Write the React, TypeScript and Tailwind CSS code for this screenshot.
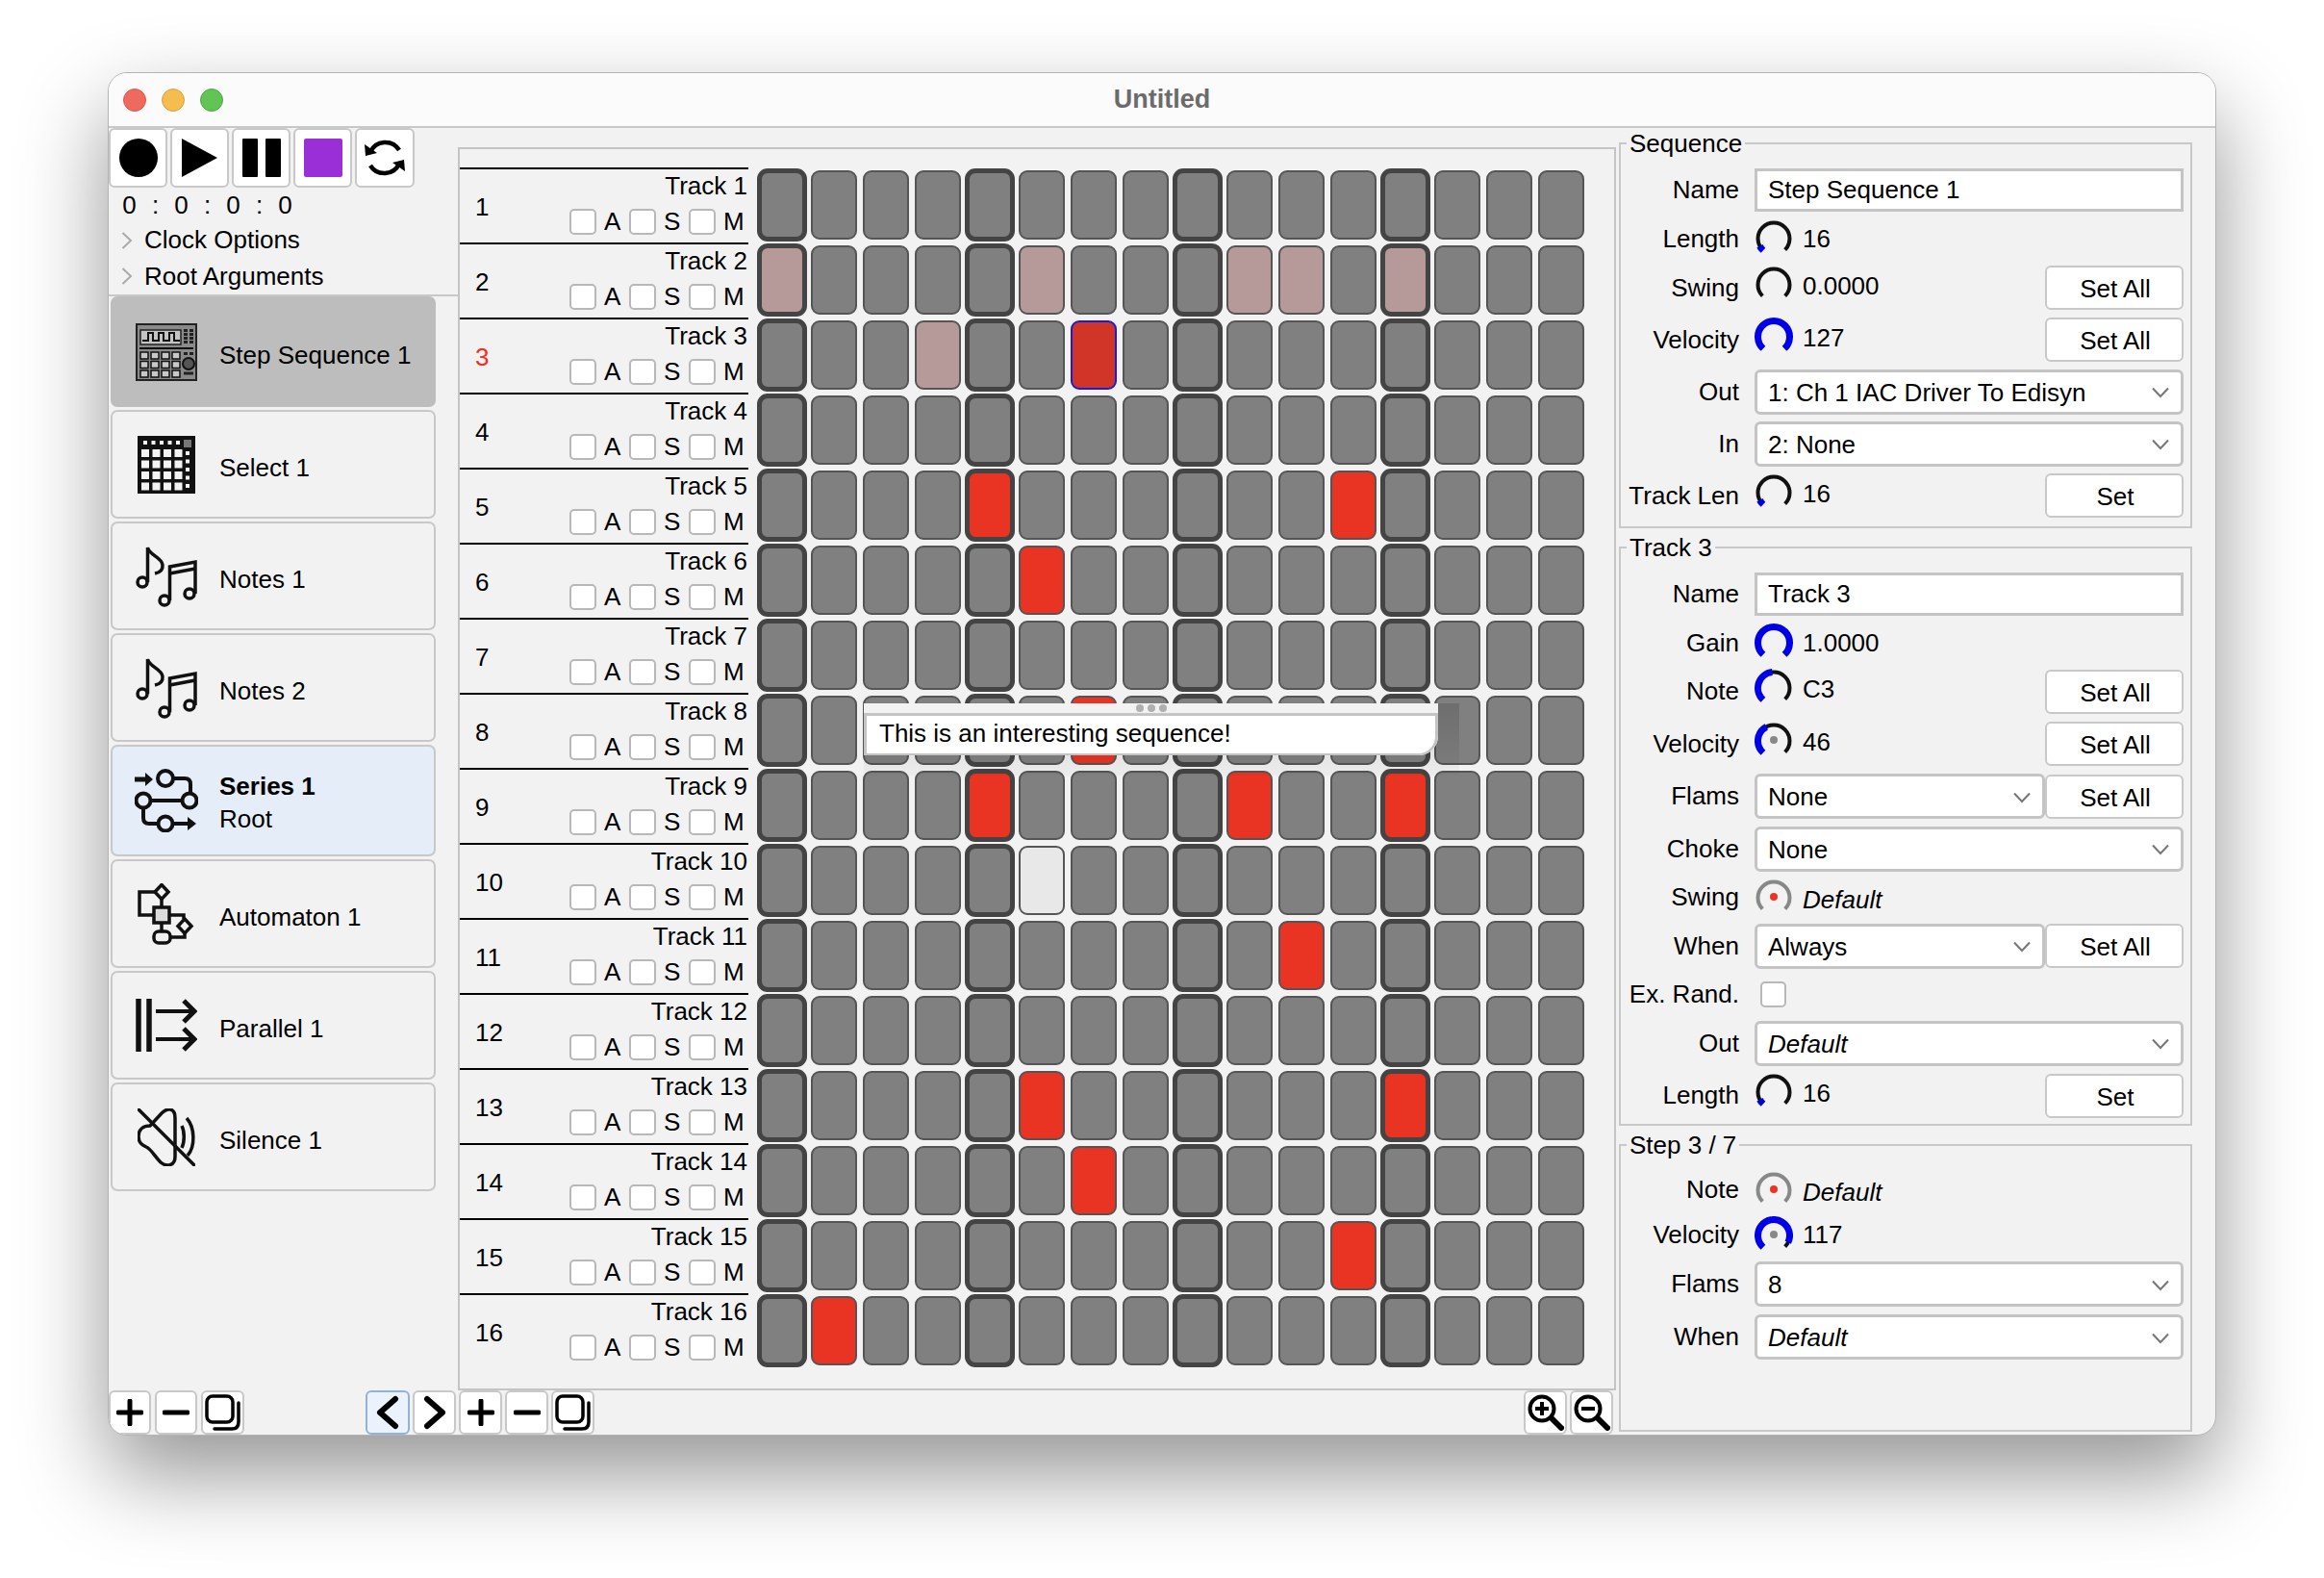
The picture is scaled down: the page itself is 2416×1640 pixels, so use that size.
import type { ReactNode } from "react";

const RED = "#e93323";

// row index -> column -> cell colour
const cells: Record<number, Record<number, string>> = {
  1: { 0: "pale", 5: "pale", 9: "pale", 10: "pale", 12: "pale" },
  2: { 3: "pale", 6: "selected" },
  4: { 4: "red", 11: "red" },
  5: { 5: "red" },
  7: { 6: "red" },
  8: { 4: "red", 9: "red", 12: "red" },
  9: { 5: "white" },
  10: { 10: "red" },
  12: { 5: "red", 12: "red" },
  13: { 6: "red" },
  14: { 11: "red" },
  15: { 1: "red" },
};

const fills: Record<string, string> = {
  off: "bg-[#808080]",
  pale: "bg-[#b69a9a]",
  red: "bg-[#e93323]",
  selected: "bg-[#d13527]",
  white: "bg-[#e8e8e8]",
};

const Cell = ({ kind, thick }: { kind: string; thick: boolean }) => {
  const size = thick ? "w-[52px] h-[76px] border-[5px] border-[#444444] rounded-[11px]" : "w-[48px] h-[72px] border-2 border-[#555555] rounded-[9px]";
  const blue = kind === "selected" ? "!border-[#1a1ae0]" : "";
  return <div className={`${size} ${blue} ${fills[kind]}`} />;
};

const Check = ({ label }: { label: string }) => (
  <div className="flex w-[62px] items-center gap-[8px]">
    <div className="h-[27px] w-[28px] rounded-[5px] border-2 border-[#b8b8b8] bg-white" />
    <span>{label}</span>
  </div>
);

const TrackRow = ({ index }: { index: number }) => (
  <div className="flex h-[78px]">
    <div className="flex h-[78px] w-[300px] justify-between border-t-2 border-black pl-[16px] pr-[1px]">
      <div className={`mt-[24px] leading-[30px] ${index === 2 ? "text-[#f03025]" : ""}`}>{index + 1}</div>
      <div className="flex flex-col items-end">
        <div className="h-[34px] leading-[34px]">Track {index + 1}</div>
        <div className="mr-[-1px] flex h-[40px]">
          <Check label="A" />
          <Check label="S" />
          <Check label="M" />
        </div>
      </div>
    </div>
    <div className="ml-[8px] grid w-[864px] grid-cols-16">
      {Array.from({ length: 16 }, (_, col) => (
        <div key={col} className="flex h-[78px] items-center justify-center">
          <Cell kind={cells[index]?.[col] ?? "off"} thick={col % 4 === 0} />
        </div>
      ))}
    </div>
  </div>
);

const polar = (deg: number, r: number) => {
  const a = (deg * Math.PI) / 180;
  return `${20 + r * Math.sin(a)} ${20 - r * Math.cos(a)}`;
};

const arc = (from: number, to: number, r: number) =>
  `M${polar(from, r)} A${r} ${r} 0 ${to - from > 180 ? 1 : 0} 1 ${polar(to, r)}`;

const Knob = ({ value, dot, gray }: { value: number; dot?: string; gray?: boolean }) => {
  const start = -138;
  const end = start + 276 * value;
  return (
    <svg width="40" height="40" viewBox="0 0 40 40" className="shrink-0">
      <path d={arc(-135, 135, 16.5)} fill="none" stroke={gray ? "#888888" : "#111111"} strokeWidth="4" />
      {value > 0 && <path d={arc(start, Math.max(end, start + 20), 16.5)} fill="none" stroke="#0000e6" strokeWidth="7" />}
      {dot && <circle cx="20" cy="19" r="4" fill={dot} />}
    </svg>
  );
};

const Row = ({ label, h, children }: { label: string; h: string; children?: ReactNode }) => (
  <div className={`flex items-center ${h}`}>
    <div className="w-[123px] shrink-0 text-right">{label}</div>
    <div className="ml-[16px] flex min-w-0 flex-1 items-center">{children}</div>
  </div>
);

const Field = ({ text }: { text: string }) => (
  <div className="flex h-full flex-1 items-center border-[3px] border-[#c4c4c4] bg-white pl-[11px]">{text}</div>
);

const SetButton = ({ text }: { text: string }) => (
  <div className="flex h-full w-[144px] shrink-0 items-center justify-center rounded-[6px] border-2 border-[#c8c8c8] bg-white pl-[2px] pt-[3px]">{text}</div>
);

const Combo = ({ text, italic }: { text: string; italic?: boolean }) => (
  <div className="flex h-full min-w-0 flex-1 items-center justify-between rounded-[6px] border-[3px] border-[#c4c4c4] bg-white pl-[11px] pr-[11px] pt-[2px]">
    <span className={italic ? "italic" : ""}>{text}</span>
    <svg width="20" height="12" viewBox="0 0 20 12">
      <path d="M2 1.5 L10 10 L18 1.5" fill="none" stroke="#777777" strokeWidth="2" />
    </svg>
  </div>
);

const KnobValue = ({ value, dot, gray, text, italic, lift }: { value: number; dot?: string; gray?: boolean; text: string; italic?: boolean; lift?: boolean }) => (
  <div className="flex flex-1 items-center">
    <div className={lift ? "mt-[-7px]" : ""}>
      <Knob value={value} dot={dot} gray={gray} />
    </div>
    <span className={`ml-[10px] ${italic ? "mt-[6px] italic" : ""} ${lift ? "mt-[-4px]" : ""}`}>{text}</span>
  </div>
);

const Group = ({ title, box, children }: { title: string; box: string; children: ReactNode }) => (
  <fieldset className={`w-[596px] border-2 border-[#c8c8c8] pr-[7px] ${box}`}>
    <legend className="ml-[6px] px-[3px] leading-[30px]">{title}</legend>
    {children}
  </fieldset>
);

const ToolButton = ({ w, active, children }: { w: string; active?: boolean; children: ReactNode }) => (
  <div className={`flex h-full shrink-0 items-center justify-center rounded-[6px] border-2 ${w} ${active ? "border-[#8fb3dc] bg-[#ebf2fb]" : "border-[#c8c8c8] bg-white"}`}>
    {children}
  </div>
);

const PlusIcon = () => (
  <svg width="28" height="28" viewBox="0 0 28 28">
    <path d="M2 14H26M14 2V26" stroke="#000" strokeWidth="5" strokeLinecap="round" />
  </svg>
);
const MinusIcon = () => (
  <svg width="28" height="28" viewBox="0 0 28 28">
    <path d="M2 14H26" stroke="#000" strokeWidth="5" strokeLinecap="round" />
  </svg>
);
const CopyIcon = () => (
  <svg width="38" height="38" viewBox="0 0 38 38">
    <rect x="2" y="2" width="27" height="27" rx="6" fill="none" stroke="#000" strokeWidth="3.5" />
    <path d="M35 9V29Q35 36 28 36H10" fill="none" stroke="#000" strokeWidth="3.5" strokeLinecap="round" />
  </svg>
);
const NavIcon = ({ flip }: { flip?: boolean }) => (
  <svg width="24" height="36" viewBox="0 0 24 36">
    <path d={flip ? "M4 4L20 18L4 32" : "M20 4L4 18L20 32"} fill="none" stroke="#000" strokeWidth="6" strokeLinecap="round" strokeLinejoin="round" />
  </svg>
);
const ZoomIcon = ({ plus }: { plus?: boolean }) => (
  <svg width="38" height="38" viewBox="0 0 38 38">
    <circle cx="15" cy="15" r="12.5" fill="none" stroke="#000" strokeWidth="4" />
    <path d="M8 15H22" stroke="#000" strokeWidth="4" />
    {plus && <path d="M15 8V22" stroke="#000" strokeWidth="4" />}
    <path d="M25 25L35 35" stroke="#000" strokeWidth="6" strokeLinecap="round" />
  </svg>
);

const SyncIcon = () => (
  <svg width="44" height="44" viewBox="0 0 44 44">
    <path d="M7 16A17 17 0 0 1 37 14" fill="none" stroke="#000" strokeWidth="4.5" />
    <path d="M37 28A17 17 0 0 1 7 30" fill="none" stroke="#000" strokeWidth="4.5" />
    <path d="M1 8L2 20L14 17Z" fill="#000" />
    <path d="M43 36L42 24L30 27Z" fill="#000" />
  </svg>
);

const StepIcon = () => (
  <svg width="64" height="60" viewBox="0 0 64 60">
    <rect x="1" y="1" width="62" height="58" fill="#8a8a8a" stroke="#222" strokeWidth="2" />
    <rect x="5" y="7" width="42" height="15" fill="#c4c4c4" stroke="#222" strokeWidth="1.5" />
    <path d="M7 18H13V10H18V18H24V10H29V18H35V10H40V18H46" fill="none" stroke="#111" strokeWidth="2" />
    <path d="M4 26H60" stroke="#111" strokeWidth="2" />
    {[0, 1, 2].map((r) =>
      [0, 1, 2, 3].map((c) => <rect key={`${r}${c}`} x={5 + c * 11} y={30 + r * 9.5} width="8" height="7" fill="#c8c8c8" stroke="#111" strokeWidth="1.5" />),
    )}
    {[0, 1, 2, 3, 4].map((r) =>
      [0, 1].map((c) => <rect key={`k${r}${c}`} x={50 + c * 6} y={6 + r * 4 + (r > 3 ? 8 : 0)} width="4" height="3" fill="#222" />),
    )}
    <circle cx="55" cy="42" r="6" fill="#555" stroke="#111" strokeWidth="2" />
    <path d="M50 52H60" stroke="#222" strokeWidth="3" />
  </svg>
);

const GridIcon = () => (
  <svg width="60" height="60" viewBox="0 0 60 60">
    <rect width="60" height="60" fill="#111" />
    {[0, 1, 2, 3].map((r) =>
      [0, 1, 2, 3].map((c) => <rect key={`${r}${c}`} x={4 + c * 11.5} y={14 + r * 11.5} width="8" height="8" fill="#f3f3f3" />),
    )}
    {[0, 1, 2, 3, 4].map((c) => (
      <rect key={c} x={6 + c * 8.5} y="5" width="4" height="4" fill="#f3f3f3" />
    ))}
    {[0, 1, 2, 3, 4].map((r) => (
      <rect key={r} x="50" y={16 + r * 8.5} width="4" height="4" fill="#f3f3f3" />
    ))}
    <rect x="48" y="4" width="8" height="8" fill="#777" />
  </svg>
);

const NotesIcon = () => (
  <svg width="64" height="64" viewBox="0 0 64 64" fill="none" stroke="#111" strokeWidth="3.5">
    <circle cx="7" cy="38" r="5" />
    <path d="M12.5 38V2C14 10 27 12 28 20C28.5 25 25 28 20 29" />
    <circle cx="30" cy="57" r="5" />
    <circle cx="56" cy="50" r="5" />
    <path d="M35.500 57V22L62 17V50" />
    <path d="M35.500 29L62 24" />
  </svg>
);

const SeriesIcon = () => (
  <svg width="66" height="66" viewBox="0 0 66 66" fill="none" stroke="#111" strokeWidth="4">
    <path d="M0 11H14" strokeWidth="5" />
    <path d="M11 4L19 11L11 18Z" fill="#111" stroke="none" />
    <circle cx="32" cy="10" r="8" />
    <path d="M40 10H52Q58 10 58 16V24" />
    <circle cx="9" cy="33" r="7.500" />
    <circle cx="57" cy="33" r="7.500" />
    <path d="M17 33H49" />
    <path d="M9 41V51Q9 57 15 57H23" />
    <circle cx="32" cy="57" r="7.500" />
    <path d="M40 57H58" />
    <path d="M55 50L64 57L55 64Z" fill="#111" stroke="none" />
  </svg>
);

const AutomatonIcon = () => (
  <svg width="64" height="64" viewBox="0 0 64 64" fill="none" stroke="#111" strokeWidth="3.5">
    <path d="M27 1.500L34 9L27 16.500L20 9Z" />
    <path d="M20 9H4V33H19" />
    <path d="M27 17V25M27 41V50" />
    <rect x="19" y="25" width="16" height="16" fill="#dcdcdc" />
    <rect x="19" y="50" width="17" height="12" rx="5" />
    <path d="M35 33H50V37" />
    <path d="M51 37L58 44.500L51 52L44 44.500Z" />
    <path d="M51 52V56H36" />
  </svg>
);

const ParallelIcon = () => (
  <svg width="64" height="56" viewBox="0 0 64 56" fill="none" stroke="#111">
    <path d="M3 0V55M14 0V55" strokeWidth="5.500" />
    <path d="M21 13H61M21 42H61" strokeWidth="4" />
    <path d="M50 2L61 13L50 24M50 31L61 42L50 53" strokeWidth="5" />
  </svg>
);

const SilenceIcon = () => (
  <svg width="60" height="60" viewBox="0 0 60 60" fill="none" stroke="#111" strokeWidth="3.5">
    <path d="M0 0L60 60" />
    <path d="M13 18C6 18 1 22 1 29C1 36 5 38 9 40C14 42 18 50 24 56C30 61 39 60 39 50V10C39 -1 31 -1 25 5L13 18Z" />
    <path d="M46 18C49 24 49 35 46 41" />
    <path d="M51 10C60 20 60 40 52 49" />
  </svg>
);

const items = [
  { icon: <StepIcon />, title: "Step Sequence 1", box: "h-[115px] border-[#bdbdbd] bg-[#bdbdbd]" },
  { icon: <GridIcon />, title: "Select 1", box: "h-[113px] border-[#c8c8c8]" },
  { icon: <NotesIcon />, title: "Notes 1", box: "h-[113px] border-[#c8c8c8]" },
  { icon: <NotesIcon />, title: "Notes 2", box: "h-[113px] border-[#c8c8c8]" },
  { icon: <SeriesIcon />, title: "Series 1", sub: "Root", box: "h-[116px] border-[#c8c8c8] bg-[#e4edf8]" },
  { icon: <AutomatonIcon />, title: "Automaton 1", box: "h-[113px] border-[#c8c8c8]" },
  { icon: <ParallelIcon />, title: "Parallel 1", box: "h-[113px] border-[#c8c8c8]" },
  { icon: <SilenceIcon />, title: "Silence 1", box: "h-[113px] border-[#c8c8c8]" },
];

const Disclosure = ({ text, h }: { text: string; h: string }) => (
  <div className={`flex items-center pl-[13px] ${h}`}>
    <svg width="12" height="20" viewBox="0 0 12 20">
      <path d="M1.500 2L10 10L1.500 18" fill="none" stroke="#aaaaaa" strokeWidth="2" />
    </svg>
    <span className="ml-[12px]">{text}</span>
  </div>
);

const Sidebar = () => (
  <div className="flex w-[363px] shrink-0 flex-col">
    <div className="flex h-[62px] gap-[3px]">
      <ToolButton w="w-[61px]">
        <div className="h-[40px] w-[40px] rounded-full bg-black" />
      </ToolButton>
      <ToolButton w="w-[61px]">
        <svg width="38" height="40" viewBox="0 0 38 40">
          <path d="M0 0L37 20L0 40Z" fill="#000" />
        </svg>
      </ToolButton>
      <ToolButton w="w-[61px]">
        <div className="flex gap-[8px]">
          <div className="h-[40px] w-[16px] rounded-[1px] bg-black" />
          <div className="h-[40px] w-[16px] rounded-[1px] bg-black" />
        </div>
      </ToolButton>
      <ToolButton w="w-[61px]">
        <div className="h-[40px] w-[40px] rounded-[2px] bg-[#9a2fd8]" />
      </ToolButton>
      <ToolButton w="w-[62px]">
        <SyncIcon />
      </ToolButton>
    </div>
    <div className="flex h-[36px] items-center pl-[8px]">
      {["0", ":", "0", ":", "0", ":", "0"].map((t, i) => (
        <span key={i} className="w-[27px] text-center">
          {t}
        </span>
      ))}
    </div>
    <Disclosure text="Clock Options" h="h-[37px]" />
    <Disclosure text="Root Arguments" h="h-[38px]" />
    <div className="flex flex-1 flex-col gap-[3px] border-t-2 border-[#c8c8c8] pl-[2px]">
      {items.map((it) => (
        <div key={it.title} className={`flex w-[338px] items-center rounded-[7px] border-2 pl-[23px] ${it.box}`}>
          <div className="flex w-[66px] shrink-0 justify-center">{it.icon}</div>
          <div className={`ml-[22px] leading-[34px] ${it.sub ? "pt-[3px]" : "pt-[6px]"}`}>
            <div className={it.sub ? "font-bold" : ""}>{it.title}</div>
            {it.sub && <div>{it.sub}</div>}
          </div>
        </div>
      ))}
    </div>
  </div>
);

const GridPanel = () => (
  <div className="relative mt-[20px] flex flex-1 flex-col border-2 border-b-2 border-[#c4c4c4]">
    <div className="h-[19px]" />
    {Array.from({ length: 16 }, (_, i) => (
      <TrackRow key={i} index={i} />
    ))}
    <div className="absolute left-[420px] top-[576px] h-[75px] w-[619px] bg-gradient-to-b from-[#00000024] to-[#00000006]" />
    <div className="absolute left-[420px] top-[576px] h-[54px] w-[597px] overflow-hidden rounded-br-[20px] bg-[#f2f2f2]">
      <div className="flex h-[10px] items-center justify-center gap-[4px]">
        <div className="h-[8px] w-[8px] rounded-full bg-[#b0b0b0]" />
        <div className="h-[8px] w-[8px] rounded-full bg-[#b0b0b0]" />
        <div className="h-[8px] w-[8px] rounded-full bg-[#b0b0b0]" />
      </div>
      <div className="flex h-[44px] items-center rounded-br-[20px] border-x-[3px] border-y-[3px] border-[#c4c4c4] border-l-[3px] border-b-[2px] bg-white pb-[2px] pl-[13px]">
        This is an interesting sequence!
      </div>
    </div>
  </div>
);

const BottomBar = () => (
  <div className="flex h-[46px] shrink-0">
    <div className="flex gap-[4px]">
      <ToolButton w="w-[44px]">
        <PlusIcon />
      </ToolButton>
      <ToolButton w="w-[44px]">
        <MinusIcon />
      </ToolButton>
      <ToolButton w="w-[45px]">
        <CopyIcon />
      </ToolButton>
    </div>
    <div className="ml-[126px] flex gap-[3px]">
      <ToolButton w="w-[46px]" active>
        <NavIcon />
      </ToolButton>
      <ToolButton w="w-[45px]">
        <NavIcon flip />
      </ToolButton>
      <ToolButton w="w-[45px]">
        <PlusIcon />
      </ToolButton>
      <ToolButton w="w-[45px]">
        <MinusIcon />
      </ToolButton>
      <ToolButton w="w-[45px]">
        <CopyIcon />
      </ToolButton>
    </div>
    <div className="ml-auto mr-[3px] flex gap-[3px]">
      <ToolButton w="w-[45px]">
        <ZoomIcon plus />
      </ToolButton>
      <ToolButton w="w-[45px]">
        <ZoomIcon />
      </ToolButton>
    </div>
  </div>
);

const Inspector = () => (
  <div className="flex flex-1 flex-col gap-[5px] pl-[3px] pt-[1px]">
    <Group title="Sequence" box="h-[415px]">
      <div className="flex flex-col gap-[10px] pt-[11px]">
        <Row label="Name" h="h-[44px]">
          <Field text="Step Sequence 1" />
        </Row>
        <Row label="Length" h="h-[38px]">
          <KnobValue value={0.03} text="16" />
        </Row>
        <Row label="Swing" h="h-[44px]">
          <KnobValue value={0} text="0.0000" lift />
          <SetButton text="Set All" />
        </Row>
        <Row label="Velocity" h="h-[44px]">
          <KnobValue value={1} text="127" lift />
          <SetButton text="Set All" />
        </Row>
        <Row label="Out" h="h-[44px]">
          <Combo text="1: Ch 1 IAC Driver To Edisyn" />
        </Row>
        <Row label="In" h="h-[44px]">
          <Combo text="2: None" />
        </Row>
        <Row label="Track Len" h="h-[44px]">
          <KnobValue value={0.03} text="16" lift />
          <SetButton text="Set" />
        </Row>
      </div>
    </Group>
    <Group title="Track 3" box="h-[616px]">
      <div className="flex flex-col gap-[9.5px] pt-[11px]">
        <Row label="Name" h="h-[45px]">
          <Field text="Track 3" />
        </Row>
        <Row label="Gain" h="h-[37px]">
          <KnobValue value={1} text="1.0000" />
        </Row>
        <Row label="Note" h="h-[45px]">
          <KnobValue value={0.48} text="C3" lift />
          <SetButton text="Set All" />
        </Row>
        <Row label="Velocity" h="h-[45px]">
          <KnobValue value={0.4} dot="#888888" text="46" lift />
          <SetButton text="Set All" />
        </Row>
        <Row label="Flams" h="h-[45px]">
          <Combo text="None" />
          <SetButton text="Set All" />
        </Row>
        <Row label="Choke" h="h-[45px]">
          <Combo text="None" />
        </Row>
        <Row label="Swing" h="h-[37px]">
          <KnobValue value={0} gray dot={RED} text="Default" italic />
        </Row>
        <Row label="When" h="h-[45px]">
          <Combo text="Always" />
          <SetButton text="Set All" />
        </Row>
        <Row label="Ex. Rand." h="h-[37px]">
          <div className="ml-[6px] h-[27px] w-[27px] rounded-[5px] border-2 border-[#b8b8b8] bg-white" />
        </Row>
        <Row label="Out" h="h-[45px]">
          <Combo text="Default" italic />
        </Row>
        <Row label="Length" h="h-[45px]">
          <KnobValue value={0.03} text="16" lift />
          <SetButton text="Set" />
        </Row>
      </div>
    </Group>
    <Group title="Step 3 / 7" box="h-[313px]">
      <div className="flex flex-col gap-[10px] pt-[13px]">
        <Row label="Note" h="h-[37px]">
          <KnobValue value={0} gray dot={RED} text="Default" italic />
        </Row>
        <Row label="Velocity" h="h-[37px]">
          <KnobValue value={0.92} dot="#888888" text="117" />
        </Row>
        <Row label="Flams" h="h-[45px]">
          <Combo text="8" />
        </Row>
        <Row label="When" h="h-[45px]">
          <Combo text="Default" italic />
        </Row>
      </div>
    </Group>
  </div>
);

export default function App() {
  return (
    <div className="h-[1640px] w-[2416px] overflow-hidden bg-white pl-[112px] pt-[75px] font-['Liberation_Sans',Arial,sans-serif] text-[26px] text-black">
      <div className="flex h-[1417px] w-[2192px] flex-col overflow-hidden rounded-[20px] border border-[#b4b4b4] bg-[#f2f2f2] shadow-[0_40px_90px_rgba(0,0,0,0.42)]">
        <div className="relative flex h-[57px] shrink-0 items-center justify-center border-b-2 border-[#c8c8c8] bg-[#fbfbfb]">
          <div className="absolute left-[15px] top-[16px] flex gap-[16px]">
            <div className="h-[24px] w-[24px] rounded-full border border-[#d9594e] bg-[#ee6a5f]" />
            <div className="h-[24px] w-[24px] rounded-full border border-[#d8a23e] bg-[#f5bd4f]" />
            <div className="h-[24px] w-[24px] rounded-full border border-[#4fa844] bg-[#61c454]" />
          </div>
          <span className="text-[27px] font-bold text-[#6b6b6b]">Untitled</span>
        </div>
        <div className="flex min-h-0 flex-1">
          <div className="flex w-[1567px] shrink-0 flex-col">
            <div className="flex min-h-0 flex-1">
              <Sidebar />
              <GridPanel />
            </div>
            <BottomBar />
          </div>
          <Inspector />
        </div>
      </div>
    </div>
  );
}
